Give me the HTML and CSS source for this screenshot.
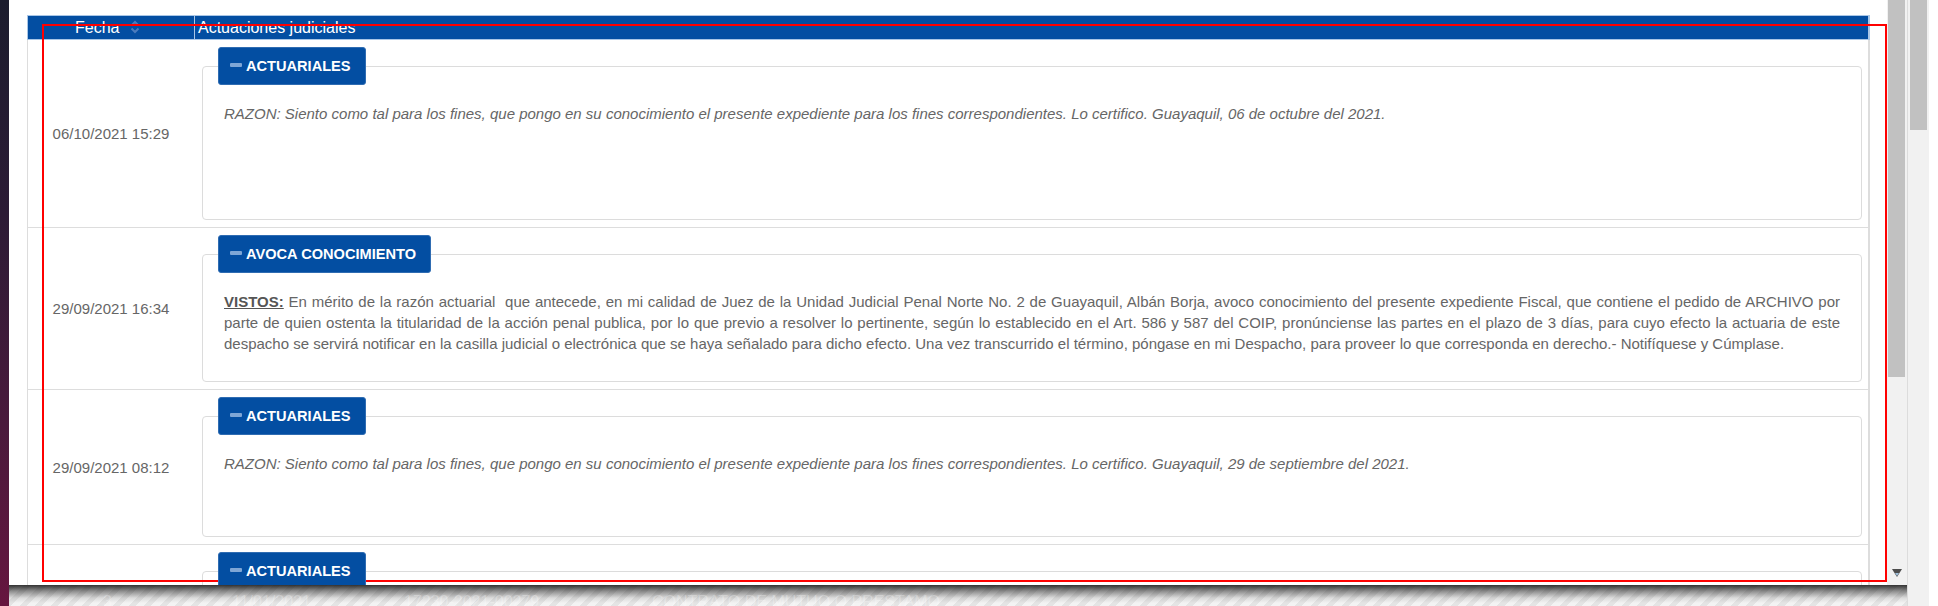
FILE: index.html
```html
<!DOCTYPE html>
<html lang="es">
<head>
<meta charset="utf-8">
<title>Actuaciones judiciales</title>
<link rel="stylesheet" href="styles.css">
</head>
<body>
<div class="screen">
  <div class="desk">
    <div class="strip"></div>
    <div class="main">
      <div class="modal">
        <div class="modal-body">
          <div class="grid">
            <div class="thead">
              <div class="th th-date">
                <span>Fecha</span>
                <svg class="sort" width="10" height="14" viewBox="0 0 10 14"><path d="M1.5 5.5 L5 2 L8.5 5.5 M1.5 8.5 L5 12 L8.5 8.5" fill="none" stroke="#4a7bbd" stroke-width="2"/></svg>
              </div>
              <div class="th th-act">Actuaciones judiciales</div>
            </div>

            <div class="row">
              <div class="date">06/10/2021 15:29</div>
              <div class="cell">
                <fieldset class="box">
                  <legend class="tag"><span class="minus"></span>ACTUARIALES</legend>
                  <div class="body tall-2"><p class="it">RAZON: Siento como tal para los fines, que pongo en su conocimiento el presente expediente para los fines correspondientes. Lo certifico. Guayaquil, 06 de octubre del 2021.</p></div>
                </fieldset>
              </div>
            </div>

            <div class="row">
              <div class="date">29/09/2021 16:34</div>
              <div class="cell">
                <fieldset class="box">
                  <legend class="tag"><span class="minus"></span>AVOCA CONOCIMIENTO</legend>
                  <div class="body"><p class="just"><b class="key">VISTOS:</b> En mérito de la razón actuarial&nbsp; que antecede, en mi calidad de Juez de la Unidad Judicial Penal Norte No. 2 de Guayaquil, Albán Borja, avoco conocimiento del presente expediente Fiscal, que contiene el pedido de ARCHIVO por parte de quien ostenta la titularidad de la acción penal publica, por lo que previo a resolver lo pertinente, según lo establecido en el Art. 586 y 587 del COIP, pronúnciense las partes en el plazo de 3 días, para cuyo efecto la actuaria de este despacho se servirá notificar en la casilla judicial o electrónica que se haya señalado para dicho efecto. Una vez transcurrido el término, póngase en mi Despacho, para proveer lo que corresponda en derecho.- Notifíquese y Cúmplase.</p></div>
                </fieldset>
              </div>
            </div>

            <div class="row">
              <div class="date">29/09/2021 08:12</div>
              <div class="cell">
                <fieldset class="box">
                  <legend class="tag"><span class="minus"></span>ACTUARIALES</legend>
                  <div class="body tall-1"><p class="it">RAZON: Siento como tal para los fines, que pongo en su conocimiento el presente expediente para los fines correspondientes. Lo certifico. Guayaquil, 29 de septiembre del 2021.</p></div>
                </fieldset>
              </div>
            </div>

            <div class="row">
              <div class="date">28/09/2021 10:05</div>
              <div class="cell">
                <fieldset class="box">
                  <legend class="tag"><span class="minus"></span>ACTUARIALES</legend>
                  <div class="body tall-1"><p class="it">RAZON: Siento como tal para los fines, que pongo en su conocimiento el presente expediente para los fines correspondientes. Lo certifico. Guayaquil, 28 de septiembre del 2021.</p></div>
                </fieldset>
              </div>
            </div>
          </div>
        </div>
        <div class="vscroll">
          <div class="thumb"></div>
          <svg class="arrow" width="10" height="9" viewBox="0 0 10 9"><path d="M0 0 H10 L5 8 Z" fill="#4d4d4d"/><path d="M3 4 H7 L5 7 Z" fill="#9fc0dc"/></svg>
        </div>
      </div>
      <div class="under">
        <span class="g1">3</span>
        <span class="g2">11/01/2021</span>
        <span class="g3">17230-2021-00279</span>
        <span class="g4">CONTRATO DE MUTUO O PRESTAMO</span>
      </div>
    </div>
  </div>
  <div class="pscroll"><div class="pthumb"></div></div>
  <div class="edge"></div>
  <div class="mark"></div>
</div>
</body>
</html>
```

FILE: styles.css
```css
html, body {
  margin: 0;
  padding: 0;
}

body {
  width: 1938px;
  height: 606px;
  overflow: hidden;
  background: #fff;
  font-family: "Liberation Sans", Arial, sans-serif;
}

.screen {
  position: relative;
  display: flex;
  height: 606px;
}

.desk {
  display: flex;
  width: 1907px;
  flex: none;
}

.strip {
  width: 9px;
  flex: none;
  background: linear-gradient(#1c1d2e, #2c1b35 35%, #4a1a3c 70%, #66163f);
}

.main {
  flex: 1;
  display: flex;
  flex-direction: column;
  min-width: 0;
}

.modal {
  height: 585px;
  flex: none;
  display: flex;
  background: #fff;
}

.modal-body {
  flex: 1;
  min-width: 0;
  overflow: hidden;
  padding: 15px 17px 0 18px;
}

.grid {
  display: flex;
  flex-direction: column;
}

/* header */
.thead {
  display: flex;
  height: 25px;
  box-sizing: border-box;
  background: #034ea2;
  border: 1px solid #a9c6e6;
  border-right-width: 2px;
  color: #fff;
  font-size: 16px;
  line-height: 18px;
}

.th {
  box-sizing: border-box;
  padding-top: 3px;
}

.th-date {
  width: 167px;
  flex: none;
  display: flex;
  align-items: flex-start;
  gap: 11px;
  padding-left: 47px;
  border-right: 1px solid #a9c6e6;
}

.sort {
  margin-top: 1px;
}

.th-act {
  flex: 1;
  padding-left: 3px;
}

/* rows */
.row {
  display: flex;
  border-left: 1px solid #ddd;
  border-right: 2px solid #ddd;
  border-bottom: 1px solid #ddd;
}

.date {
  width: 166px;
  flex: none;
  display: flex;
  align-items: center;
  justify-content: center;
  font-size: 15px;
  color: #666;
}

.cell {
  flex: 1;
  min-width: 0;
  padding: 7px 6px 7px 8px;
}

.box {
  margin: 0;
  padding: 0 15px;
  min-width: 0;
  border: 1px solid #dcdcdc;
  border-radius: 4px;
}

.tag {
  position: relative;
  z-index: 2;
  display: flex;
  align-items: center;
  gap: 4px;
  height: 38px;
  box-sizing: border-box;
  padding: 0 14px 1px 11px;
  background: #034ea2;
  border: 1px solid #2f6cb2;
  border-radius: 3px;
  color: #fff;
  font-weight: bold;
  font-size: 14.6px;
}

.minus {
  width: 12px;
  height: 4px;
  background: #7ea6d6;
  border-radius: 1px;
  margin-top: -2px;
}

.body {
  padding: 18px 6px 27px;
  font-size: 15px;
  line-height: 21px;
  color: #666;
}

.body p {
  margin: 0;
}

.it {
  font-style: italic;
}

.just {
  text-align: justify;
}

.key {
  color: #555;
  text-decoration: underline;
}

.tall-1 {
  padding-bottom: 62px;
}

.tall-2 {
  padding-bottom: 95px;
}

/* inner scrollbar */
.vscroll {
  width: 20px;
  flex: none;
  background: #f1f1f1;
  display: flex;
  flex-direction: column;
  justify-content: space-between;
  padding-bottom: 7px;
  box-sizing: border-box;
}

.thumb {
  width: 17px;
  height: 377px;
  margin-left: 1px;
  background: #c1c1c1;
}

.arrow {
  margin-left: 5px;
}

/* area under the modal */
.under {
  flex: 1;
  display: grid;
  grid-template-columns: 223px 172px 248px 1fr;
  padding-top: 8px;
  box-sizing: border-box;
  font-size: 16px;
  line-height: 18px;
  color: rgba(255, 255, 255, 0.28);
  background:
    linear-gradient(rgba(30, 30, 30, 0.9), rgba(55, 55, 55, 0.55) 6px, rgba(90, 90, 90, 0.15) 13px, rgba(0, 0, 0, 0) 18px),
    repeating-linear-gradient(135deg, #e4e4e4 0 5px, #f3f3f3 5px 11px);
  overflow: hidden;
}

.g1 {
  padding-left: 94px;
}

/* page scrollbar */
.pscroll {
  width: 22px;
  flex: none;
  box-sizing: border-box;
  background: #f1f1f1;
  border-left: 1px solid #dcdcdc;
  padding-left: 2px;
}

.pthumb {
  width: 17px;
  height: 130px;
  background: #c1c1c1;
}

.edge {
  width: 9px;
  flex: none;
  background: #fff;
}

/* annotation frame */
.mark {
  position: absolute;
  left: 42px;
  top: 24px;
  width: 1845px;
  height: 558px;
  box-sizing: border-box;
  border: 2px solid #f00;
  z-index: 1;
  pointer-events: none;
}
```
